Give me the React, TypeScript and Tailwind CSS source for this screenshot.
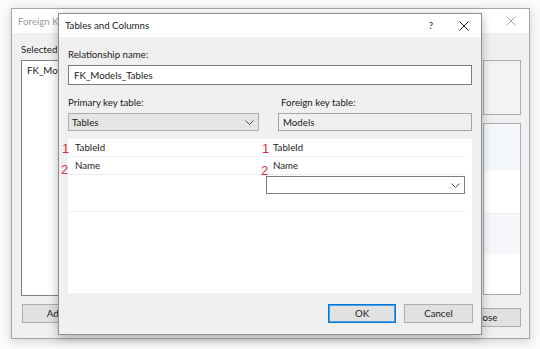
import React from 'react'

function CloseX({ color }: { color: string }) {
  return (
    <svg width="10" height="10" viewBox="0 0 10 10">
      <path d="M0.5 0.5L9.5 9.5M9.5 0.5L0.5 9.5" stroke={color} strokeWidth="1" fill="none" />
    </svg>
  )
}

function Chevron() {
  return (
    <svg width="9" height="5" viewBox="0 0 9 5">
      <polyline points="0.5,0.5 4.5,4.5 8.5,0.5" fill="none" stroke="#505050" strokeWidth="1" />
    </svg>
  )
}

// window behind the dialog, only its edges show
function BackWindow() {
  return (
    <div className="absolute left-[11px] top-[8px] w-[519px] h-[331px] border border-[#a5a5a5] bg-[#f0f0f0] shadow-[0_2px_10px_rgba(0,0,0,0.18)] flex flex-col">
      <div className="h-[24px] bg-white flex items-center pl-[6px] pr-[13px] text-[#9b9b9b]">
        <span className="whitespace-nowrap">Foreign K</span>
        <span className="ml-auto flex">
          <CloseX color="#a8a8a8" />
        </span>
      </div>
      <div className="flex-1 flex justify-between pl-[9px] pr-[8px]">
        <div className="w-[210px] flex flex-col pt-[9px]">
          <div className="h-[14px] leading-[14px]">Selected</div>
          <div className="mt-[4px] h-[236px] border border-[#828282] bg-white px-[5px] pt-[2px] leading-[14px]">
            FK_Mo
          </div>
          <div className="mt-[8px] ml-[1px] flex gap-[8px]">
            <button className="w-[67px] h-[19px] border border-[#adadad] bg-[#e1e1e1]">Add</button>
            <button className="w-[67px] h-[19px] border border-[#adadad] bg-[#e1e1e1]" />
          </div>
        </div>
        <div className="w-[38px] flex flex-col items-end pt-[27px]">
          <div className="w-full h-[55px] border border-[#adadad] bg-[#f3f3f3]" />
          <div className="mt-[8px] w-full h-[172px] border border-[#adadad] bg-white flex flex-col">
            <div className="h-[46px] bg-[#f3f6fa]" />
            <div className="h-[44px] border-b border-[#eeeeee]" />
            <div className="h-[40px] bg-[#f5f7fa]" />
          </div>
          <button className="mt-[13px] w-[71px] h-[19px] border border-[#adadad] bg-[#e1e1e1]">Close</button>
        </div>
      </div>
    </div>
  )
}

function Mark({ text, className }: { text: string; className: string }) {
  return (
    <span className={`absolute text-[13px] leading-none font-['Liberation_Sans',sans-serif] text-[#d92b42] ${className}`}>
      {text}
    </span>
  )
}

function Dialog() {
  return (
    <div className="absolute left-[58px] top-[13px] w-[424px] h-[322px] border border-[#8f8f8f] bg-[#f0f0f0] shadow-[0_3px_10px_rgba(0,0,0,0.28)] flex flex-col">
      <div className="h-[23px] bg-white flex items-center pl-[6px] pr-[12px]">
        <span>Tables and Columns</span>
        <span className="ml-auto mr-[26px]">?</span>
        <span className="flex">
          <CloseX color="#1a1a1a" />
        </span>
      </div>
      <div className="flex-1 flex flex-col px-[9px] pt-[10px]">
        <div className="h-[14px] leading-[14px]">Relationship name:</div>
        <div className="mt-[4px] h-[20px] border border-[#7a7a7a] bg-white flex items-center px-[5px]">
          FK_Models_Tables
        </div>

        <div className="mt-[10px] flex">
          <div className="w-[191px] flex flex-col">
            <div className="h-[14px] leading-[14px]">Primary key table:</div>
            <div className="mt-[4px] h-[18px] border border-[#adadad] bg-[#e5e5e5] flex items-center justify-between pl-[3px] pr-[4px]">
              <span>Tables</span>
              <Chevron />
            </div>
          </div>
          <div className="flex-1 ml-[19px] flex flex-col">
            <div className="h-[14px] leading-[14px] pl-[3px]">Foreign key table:</div>
            <div className="mt-[4px] h-[18px] border border-[#a5a5a5] bg-[#f0f0f0] flex items-center pl-[4px]">
              Models
            </div>
          </div>
        </div>

        <div className="relative mt-[8px] h-[154px] bg-white">
          <div className="w-[397px] flex flex-col">
            <div className="h-[18px] flex items-center border-b border-[#f0f0f0]">
              <span className="w-[197px] pl-[7px]">TableId</span>
              <span className="flex-1 pl-[8px]">TableId</span>
            </div>
            <div className="h-[18px] flex items-center border-b border-[#ececec]">
              <span className="w-[197px] pl-[7px]">Name</span>
              <span className="flex-1 pl-[8px]">Name</span>
            </div>
            <div className="h-[19px] flex items-start">
              <span className="w-[198px]" />
              <div className="mt-[1px] w-[200px] h-[18px] border border-[#7a7a7a] bg-white flex items-center justify-end pr-[4px]">
                <Chevron />
              </div>
            </div>
            <div className="h-[18px] border-b border-[#efefef]" />
          </div>
          {/* red hand annotations */}
          <Mark text="1" className="left-[-6px] top-[3px]" />
          <Mark text="2" className="left-[-7px] top-[24px]" />
          <Mark text="1" className="left-[194px] top-[3px]" />
          <Mark text="2" className="left-[193px] top-[25px]" />
        </div>

        <div className="mt-[11px] flex justify-end gap-[8px] -mr-[1px]">
          <button className="w-[68px] h-[19px] border border-[#0078d7] shadow-[inset_0_0_0_1px_#4d9de0] bg-[#e1e1e1]">OK</button>
          <button className="w-[69px] h-[19px] border border-[#adadad] bg-[#e1e1e1]">Cancel</button>
        </div>
      </div>
    </div>
  )
}

export default function App() {
  return (
    <div className="relative w-[540px] h-[349px] overflow-hidden bg-[#fbfbfb] font-['Lato','Noto_Sans',sans-serif] text-[9.7px] text-[#1a1a1a]">
      <BackWindow />
      <Dialog />
    </div>
  )
}
